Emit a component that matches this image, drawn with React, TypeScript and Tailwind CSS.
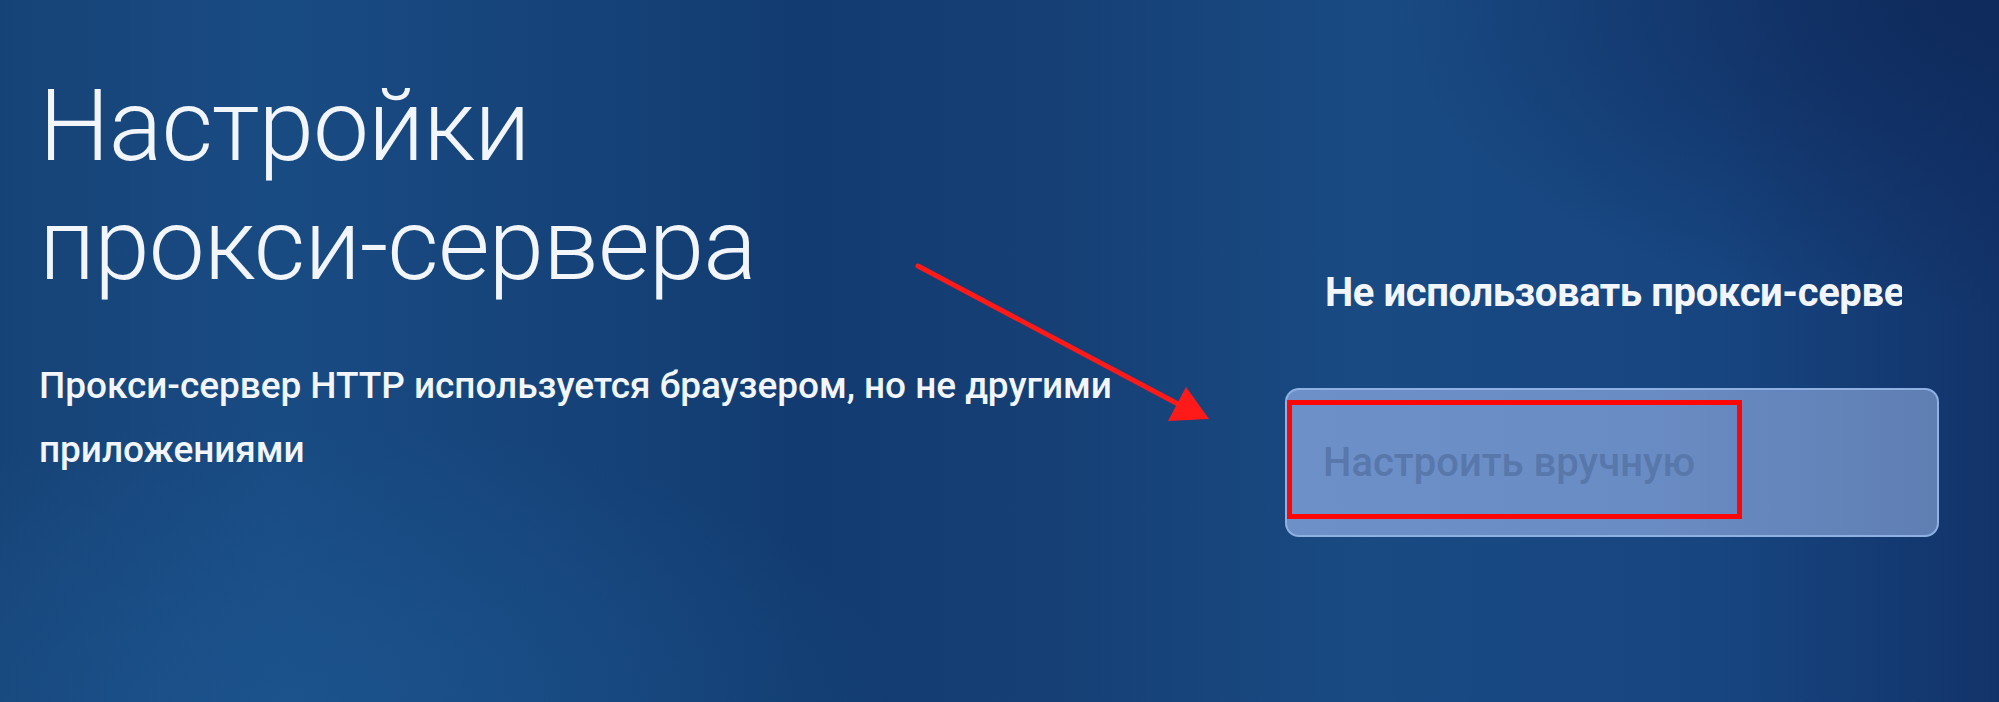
import { useMemo } from 'react';

function Arrow() {
	// red annotation arrow drawn over the screen
	return (
		<svg
			className="absolute left-0 top-0 pointer-events-none"
			width={1999}
			height={702}
			viewBox="0 0 1999 702"
		>
			<line x1={918} y1={266} x2={1178} y2={404} stroke="#ff1a1a" strokeWidth={5} strokeLinecap="round" />
			<polygon points="1209,419 1168,421 1186,387" fill="#ff1a1a" />
		</svg>
	);
}

export default function App() {
	const title = useMemo(() => ['Настройки', 'прокси-сервера'], []);

	return (
		<div className="relative w-[1999px] h-[702px] overflow-hidden bg-[linear-gradient(90deg,#164377_0%,#194b83_14%,#123c71_40%,#153f75_52%,#194a82_68%,#174580_86%,#12336a_100%)] font-['Roboto','Noto_Sans',sans-serif] text-[#f2f6fb]">
			<div className="absolute inset-0 bg-[radial-gradient(ellipse_30%_45%_at_100%_0%,#0f2a5c_0%,rgba(15,42,92,0)_100%)]" />
			<div className="absolute inset-0 bg-[radial-gradient(ellipse_30%_40%_at_15%_100%,rgba(29,86,144,0.7)_0%,rgba(29,86,144,0)_100%)]" />

			<div className="relative flex h-full">
				<div className="w-[1285px] shrink-0 pl-[39px] pt-[66px]">
					<h1 className="text-[100px] leading-[119px] font-light tracking-[-1px]">
						{title.map((line) => (
							<div key={line}>{line}</div>
						))}
					</h1>
					<p className="mt-[50px] w-[1130px] text-[37px] leading-[64px] font-medium tracking-[-0.05px]">
						Прокси-сервер HTTP используется браузером, но не другими приложениями
					</p>
				</div>

				<div className="w-[654px] shrink-0 pt-[269px]">
					<div className="pl-[40px] pr-[37px]">
						<div className="overflow-hidden whitespace-nowrap text-[40px] leading-[48px] font-bold tracking-[-0.4px]">
							Не использовать прокси-сервер
						</div>
					</div>
					<div className="relative mt-[71px] h-[149px] rounded-[14px] border-2 border-[#8fb0e2] bg-[linear-gradient(90deg,#6d90c9_0%,#6a8cc4_55%,#5f7fb3_100%)] pl-[36px] flex items-center">
						<span className="text-[40px] leading-none font-medium text-[#5877ab]">
							Настроить вручную
						</span>
						<div className="absolute left-[0px] top-[10px] w-[455px] h-[119px] border-[5px] border-[#ff0606]" />
					</div>
				</div>
			</div>

			<Arrow />
		</div>
	);
}
